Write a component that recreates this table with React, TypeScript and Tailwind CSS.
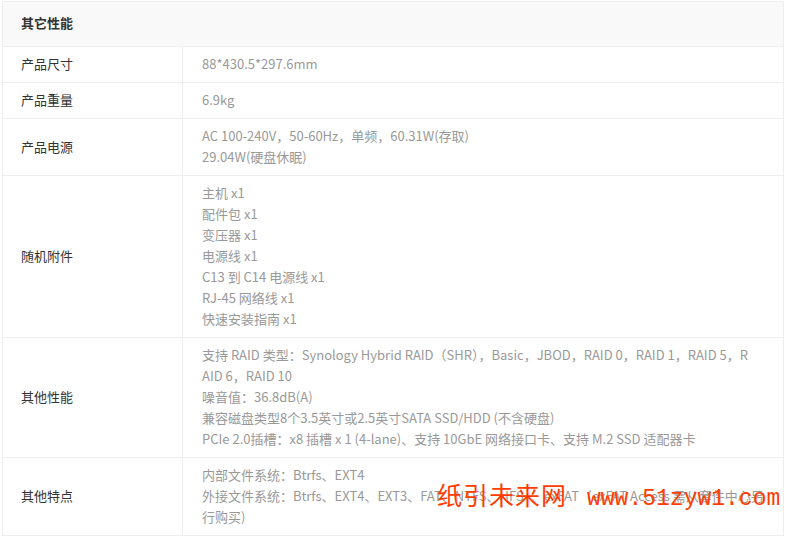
const rows: { label: string; lines: string[] }[] = [
  { label: "产品尺寸", lines: ["88*430.5*297.6mm"] },
  { label: "产品重量", lines: ["6.9kg"] },
  { label: "产品电源", lines: ["AC 100-240V，50-60Hz，单频，60.31W(存取)", "29.04W(硬盘休眠)"] },
  {
    label: "随机附件",
    lines: ["主机 x1", "配件包 x1", "变压器 x1", "电源线 x1", "C13 到 C14 电源线 x1", "RJ-45 网络线 x1", "快速安装指南 x1"],
  },
  {
    label: "其他性能",
    lines: [
      "支持 RAID 类型：Synology Hybrid RAID（SHR），Basic，JBOD，RAID 0，RAID 1，RAID 5，R",
      "AID 6，RAID 10",
      "噪音值：36.8dB(A)",
      "兼容磁盘类型8个3.5英寸或2.5英寸SATA SSD/HDD (不含硬盘)",
      "PCIe 2.0插槽：x8 插槽 x 1 (4-lane)、支持 10GbE 网络接口卡、支持 M.2 SSD 适配器卡",
    ],
  },
  {
    label: "其他特点",
    lines: [
      "内部文件系统：Btrfs、EXT4",
      "外接文件系统：Btrfs、EXT4、EXT3、FAT、NTFS、HFS+、exFAT（exFAT Access 需从套件中心另",
      "行购买)",
    ],
  },
]

export default function App() {
  return (
    <div className="relative w-[789px] h-[542px] bg-white overflow-hidden font-['Noto_Sans_CJK_SC',sans-serif] text-[13px]">
      <div className="ml-[2px] mt-[1px] w-[782px] border-l border-r border-t border-[#eeeeee]">
        {/* Header */}
        <div className="h-[45px] bg-[#f9f9f9] border-b border-[#eeeeee] flex items-center pl-[18px] pb-[2px] font-bold text-[#333333]">
          其它性能
        </div>

        {/* Rows */}
        {rows.map((row) => (
          <div key={row.label} className="grid grid-cols-[180px_1fr] border-b border-[#eeeeee] leading-[21px]">
            <div className="flex items-center pl-[18px] text-[#333333] border-r border-[#eeeeee] pt-[6px] pb-[8px]">
              {row.label}
            </div>
            <div className="pl-[19px] pr-[10px] pt-[6px] pb-[8px] text-[#999999] whitespace-nowrap">
              {row.lines.map((line, i) => (
                <div key={i}>{line}</div>
              ))}
            </div>
          </div>
        ))}
      </div>

      {/* Watermark overlay */}
      <div className="absolute left-[437px] top-[482px] flex items-baseline gap-[20px] text-[#ff3c00] leading-none whitespace-nowrap">
        <span className="font-['Noto_Sans_CJK_SC',sans-serif] text-[25px] tracking-[1px]">纸引未来网</span>
        <span className="font-['Liberation_Mono',monospace] text-[23px]">www.51zyw1.com</span>
      </div>
    </div>
  )
}
